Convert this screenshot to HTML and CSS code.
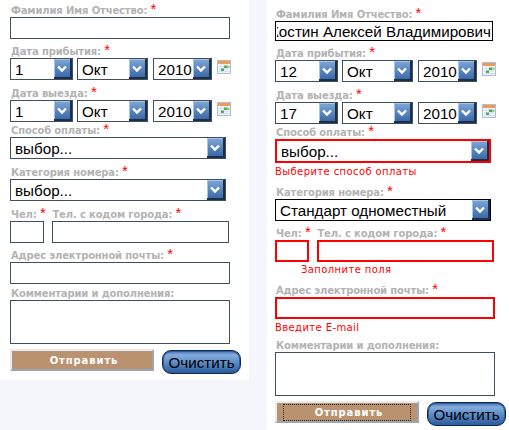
FILE: index.html
```html
<!DOCTYPE html>
<html lang="ru">
<head>
  <meta charset="UTF-8">
  <title>Бронирование</title>
  <link rel="stylesheet" href="styles.css">
</head>
<body>
  <svg class="sprites" width="0" height="0">
    <defs>
      <linearGradient id="arrow-bg" x1="0" y1="0" x2="0" y2="1">
        <stop offset="0" stop-color="#7fa6d8"/>
        <stop offset="1" stop-color="#3b6aa8"/>
      </linearGradient>
      <symbol id="arrow" viewBox="0 0 18 20">
        <rect width="18" height="20" fill="#1c2e48"/>
        <rect width="16" height="18" fill="url(#arrow-bg)"/>
        <path d="M.5 18V.5H16" fill="none" stroke="#a9c4e6"/>
        <path d="M4 7.5 8 11.5l4-4" fill="none" stroke="#fff" stroke-width="2.4"/>
      </symbol>
      <symbol id="calendar" viewBox="0 0 14 14">
        <rect x=".5" y=".5" width="13" height="13" fill="#f6f8fc" stroke="#a9bfdc"/>
        <rect x="1" y="1" width="12" height="3" fill="#ef9a55"/>
        <path d="M1 6.5h12M1 9h12M1 11.5h12M4 4v9M7 4v9M10 4v9" stroke="#cfd8e6" stroke-width=".7"/>
        <rect x="7" y="5.5" width="3" height="2.5" fill="#58a55c"/>
        <rect x="4" y="8.5" width="3" height="2.5" fill="#58a55c"/>
        <rect x="10" y="5.5" width="2.5" height="2.5" fill="#9ccb8e"/>
      </symbol>
    </defs>
  </svg>

  <div class="page">
    <form class="panel panel-left">
      <label class="lbl">Фамилия Имя Отчество: <b>*</b></label>
      <input class="txt" type="text">

      <label class="lbl mt5">Дата прибытия: <b>*</b></label>
      <div class="date-row">
        <div class="sel sel-day"><select><option>1</option></select><svg class="arrow"><use href="#arrow"/></svg></div>
        <div class="sel sel-month"><select><option>Окт</option></select><svg class="arrow"><use href="#arrow"/></svg></div>
        <div class="sel sel-year"><select><option>2010</option></select><svg class="arrow"><use href="#arrow"/></svg></div>
        <svg class="cal"><use href="#calendar"/></svg>
      </div>

      <label class="lbl mt6">Дата выезда: <b>*</b></label>
      <div class="date-row">
        <div class="sel sel-day"><select><option>1</option></select><svg class="arrow"><use href="#arrow"/></svg></div>
        <div class="sel sel-month"><select><option>Окт</option></select><svg class="arrow"><use href="#arrow"/></svg></div>
        <div class="sel sel-year"><select><option>2010</option></select><svg class="arrow"><use href="#arrow"/></svg></div>
        <svg class="cal"><use href="#calendar"/></svg>
      </div>

      <label class="lbl mt1">Способ оплаты: <b>*</b></label>
      <div class="sel sel-wide"><select><option>выбор...</option></select><svg class="arrow"><use href="#arrow"/></svg></div>

      <label class="lbl mt6">Категория номера: <b>*</b></label>
      <div class="sel sel-wide"><select><option>выбор...</option></select><svg class="arrow"><use href="#arrow"/></svg></div>

      <label class="lbl mt6">Чел: <b>*</b>&nbsp; Тел. с кодом города: <b>*</b></label>
      <div class="phone-row">
        <input class="txt txt-num" type="text">
        <input class="txt txt-phone" type="text">
      </div>

      <label class="lbl mt5">Адрес электронной почты: <b>*</b></label>
      <input class="txt" type="text">

      <label class="lbl mt2">Комментарии и дополнения:</label>
      <textarea class="txt area"></textarea>

      <div class="buttons">
        <button class="btn-send" type="button"><span>Отправить</span></button>
        <button class="btn-clear" type="button">Очистить</button>
      </div>
    </form>

    <form class="panel panel-right">
      <label class="lbl">Фамилия Имя Отчество: <b>*</b></label>
      <input class="txt txt-filled" type="text" value="Костин Алексей Владимирович">

      <label class="lbl mt5">Дата прибытия: <b>*</b></label>
      <div class="date-row">
        <div class="sel sel-day"><select><option>12</option></select><svg class="arrow"><use href="#arrow"/></svg></div>
        <div class="sel sel-month"><select><option>Окт</option></select><svg class="arrow"><use href="#arrow"/></svg></div>
        <div class="sel sel-year"><select><option>2010</option></select><svg class="arrow"><use href="#arrow"/></svg></div>
        <svg class="cal"><use href="#calendar"/></svg>
      </div>

      <label class="lbl mt6">Дата выезда: <b>*</b></label>
      <div class="date-row">
        <div class="sel sel-day"><select><option>17</option></select><svg class="arrow"><use href="#arrow"/></svg></div>
        <div class="sel sel-month"><select><option>Окт</option></select><svg class="arrow"><use href="#arrow"/></svg></div>
        <div class="sel sel-year"><select><option>2010</option></select><svg class="arrow"><use href="#arrow"/></svg></div>
        <svg class="cal"><use href="#calendar"/></svg>
      </div>

      <label class="lbl mt1">Способ оплаты: <b>*</b></label>
      <div class="sel sel-wide sel-error"><select><option>выбор...</option></select><svg class="arrow"><use href="#arrow"/></svg></div>
      <div class="err">Выберите способ оплаты</div>

      <label class="lbl mt6">Категория номера: <b>*</b></label>
      <div class="sel sel-wide sel-dark"><select><option>Стандарт одноместный</option></select><svg class="arrow"><use href="#arrow"/></svg></div>

      <label class="lbl mt5">Чел: <b>*</b>&nbsp; Тел. с кодом города: <b>*</b></label>
      <div class="phone-row">
        <input class="txt txt-num txt-error" type="text">
        <input class="txt txt-phone txt-error" type="text">
      </div>
      <div class="err err-phone">Заполните поля</div>

      <label class="lbl mt6">Адрес электронной почты: <b>*</b></label>
      <input class="txt txt-error" type="text">
      <div class="err">Введите E-mail</div>

      <label class="lbl mt3">Комментарии и дополнения:</label>
      <textarea class="txt area"></textarea>

      <div class="buttons">
        <button class="btn-send btn-focus" type="button"><span>Отправить</span></button>
        <button class="btn-clear" type="button">Очистить</button>
      </div>
    </form>
  </div>
</body>
</html>
```

FILE: styles.css
```css
body {
  margin: 0;
  background-color: #f5f6fb;
  font-family: "DejaVu Sans", sans-serif;
  overflow: hidden;
}

.sprites {
  position: absolute;
}

.page {
  display: flex;
  align-items: flex-start;
  gap: 18px;
}

.panel {
  display: flex;
  flex-direction: column;
  align-items: flex-start;
  background-color: #fff;
  box-sizing: border-box;
}

.panel-left {
  width: 249px;
  height: 380px;
  padding: 3px 0 0 10px;
}

.panel-right {
  width: 242px;
  height: 430px;
  padding: 7px 0 0 8px;
}

/* Labels */
.lbl {
  display: block;
  height: 14px;
  line-height: 15px;
  padding-left: 1px;
  font-size: 10px;
  font-weight: bold;
  letter-spacing: -.15px;
  color: #b3b3b3;
  white-space: nowrap;
}

.lbl b {
  font-family: "Liberation Sans", sans-serif;
  font-size: 15px;
  font-weight: normal;
  letter-spacing: 0;
  color: #f00;
  line-height: 10px;
}

.mt1 { margin-top: 1px; }
.mt2 { margin-top: 2px; }
.mt3 { margin-top: 3px; }
.mt5 { margin-top: 5px; }
.mt6 { margin-top: 6px; }

/* Text fields */
.txt {
  display: block;
  box-sizing: border-box;
  width: 220px;
  height: 22px;
  margin: 0;
  padding: 1px 3px;
  border: 1px solid #3f4f5c;
  border-radius: 0;
  outline: none;
  background: #fff;
  font-family: "Liberation Sans", sans-serif;
  font-size: 15.2px;
  color: #000;
}

.txt-filled {
  width: 218px;
  height: 20px;
  padding: 0 1px;
  border-color: #000;
  direction: rtl;
}

.txt-error {
  border: 2px solid #f00;
}

.area {
  height: 44px;
  resize: none;
}

.phone-row {
  display: flex;
  gap: 8px;
}

.txt-num {
  width: 34px;
}

.txt-phone {
  width: 177px;
}

/* Selects: native control with the drawn arrow laid over its right end */
.date-row {
  display: flex;
  align-items: flex-start;
  gap: 4px;
}

.sel {
  position: relative;
  box-sizing: border-box;
  height: 22px;
  border: 1px solid #3f4f5c;
  background: #fff;
}

.sel select {
  display: block;
  width: 100%;
  height: 100%;
  margin: 0;
  padding: 0 0 0 4px;
  border: 0;
  border-radius: 0;
  outline: none;
  background: none;
  appearance: none;
  -webkit-appearance: none;
  font-family: "Liberation Sans", sans-serif;
  font-size: 15.2px;
  color: #000;
}

.sel .arrow {
  position: absolute;
  top: 0;
  right: 0;
  width: 18px;
  height: 20px;
  pointer-events: none;
}

.sel-day { width: 63px; }
.sel-month { width: 71px; margin-right: 1px; }
.sel-year { width: 59px; }
.sel-wide { width: 216px; }
.sel-dark { border-color: #000; }

.sel-error {
  height: 24px;
  border: 2px solid #f00;
}

.cal {
  width: 14px;
  height: 14px;
  margin: 2px 0 0 1px;
}

/* Error messages */
.err {
  height: 14px;
  margin-top: 2px;
  line-height: 14px;
  font-size: 10px;
  letter-spacing: .4px;
  color: #f00;
  white-space: nowrap;
}

.err-phone {
  margin-top: 1px;
  padding-left: 26px;
}

/* Buttons */
.buttons {
  display: flex;
  align-items: flex-start;
  gap: 8px;
  margin-top: 5px;
}

.btn-send {
  box-sizing: border-box;
  width: 144px;
  height: 22px;
  margin: 0;
  padding: 0;
  border: 2px solid;
  border-color: #e6ecf2 #9aa6b2 #9aa6b2 #e6ecf2;
  background-color: #bb926f;
  font-family: "DejaVu Sans", sans-serif;
  font-size: 10px;
  font-weight: bold;
  letter-spacing: .9px;
  color: #fff;
}

.btn-send span {
  display: block;
  height: 17px;
  margin: 0 6px;
  padding-left: 4px;
  line-height: 17px;
}

.btn-focus span {
  outline: 1px dotted #222;
  outline-offset: -1px;
}

.btn-clear {
  box-sizing: border-box;
  width: 79px;
  height: 24px;
  margin: 1px 0 0;
  padding: 0;
  border: 1px solid #10294f;
  border-radius: 9px;
  background: linear-gradient(#3f6fb0, #86acdc 18%, #5f8fca 50%, #2c5a9a);
  box-shadow: inset 0 0 0 1px #2f5e9e;
  font-family: "Liberation Sans", sans-serif;
  font-size: 15.2px;
  color: #000;
}
```
